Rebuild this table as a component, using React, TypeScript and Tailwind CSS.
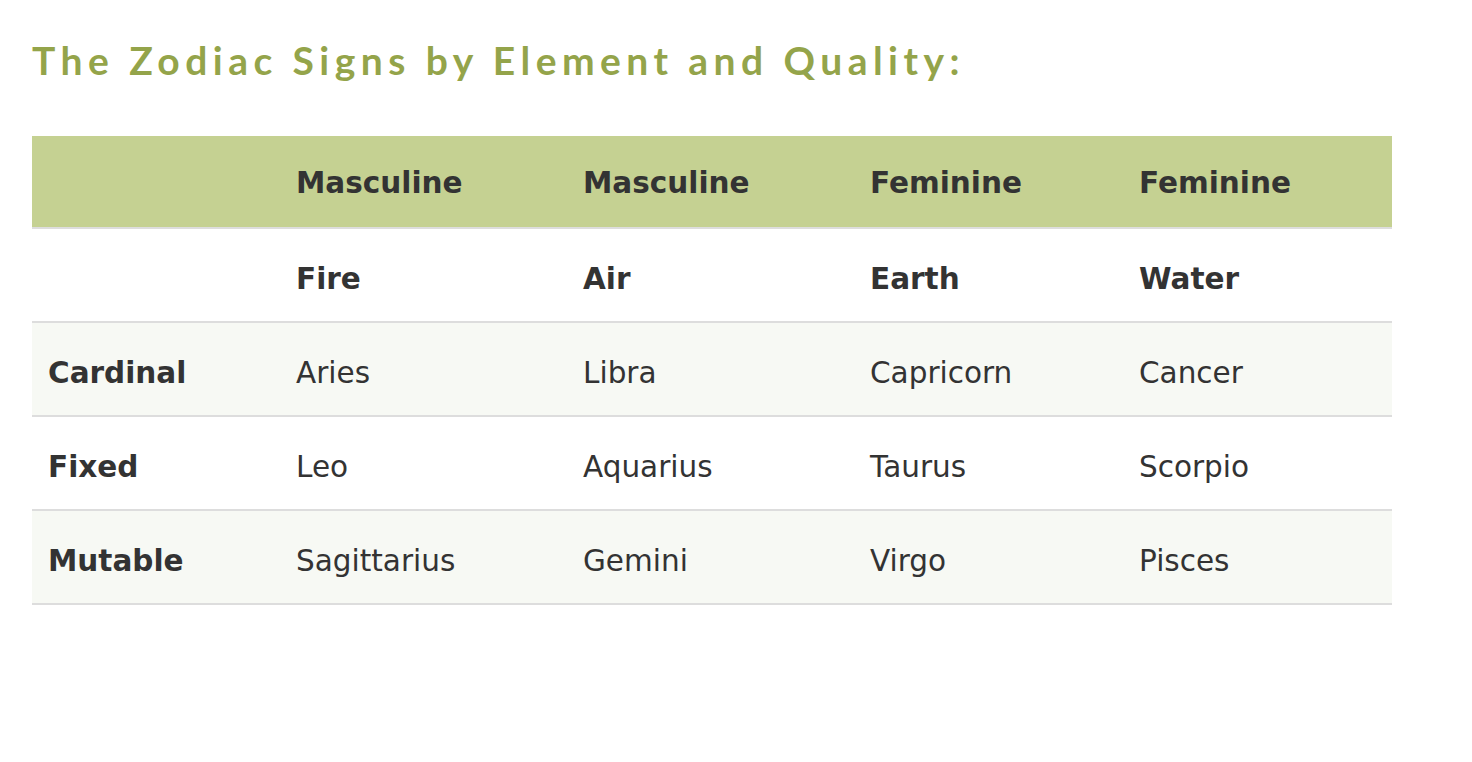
export default function App() {
  const heads = ["Masculine", "Masculine", "Feminine", "Feminine"];
  const elements = ["Fire", "Air", "Earth", "Water"];
  const rows = [
    ["Cardinal", "Aries", "Libra", "Capricorn", "Cancer"],
    ["Fixed", "Leo", "Aquarius", "Taurus", "Scorpio"],
    ["Mutable", "Sagittarius", "Gemini", "Virgo", "Pisces"],
  ];
  const widths = ["w-[248px]", "w-[287px]", "w-[287px]", "w-[269px]", "w-[269px]"];

  return (
    <div className="min-h-screen bg-white px-8 pt-[36px] font-['DejaVu_Sans',Verdana,sans-serif] text-[#333333]">
      <h1 className="font-['Lato',sans-serif] text-[39px] font-bold tracking-[5.45px] text-[#94a44a] leading-[48px]">
        The Zodiac Signs by Element and Quality:
      </h1>

      <table className="mt-[52px] w-[1360px] border-collapse table-fixed text-[29.5px] leading-[36px]">
        <colgroup>
          {widths.map((w, i) => (
            <col key={i} className={w} />
          ))}
        </colgroup>
        <thead>
          <tr className="h-[92px] bg-[#c5d192] border-b-2 border-[#dddddd]">
            <th className="px-4 pt-[3px] text-left font-bold"></th>
            {heads.map((h, i) => (
              <th key={i} className="px-4 pt-[3px] text-left font-bold">{h}</th>
            ))}
          </tr>
        </thead>
        <tbody>
          <tr className="h-[94px] bg-white border-b-2 border-[#dddddd]">
            <td className="px-4 pt-[7px]"></td>
            {elements.map((e) => (
              <td key={e} className="px-4 pt-[7px] font-bold">{e}</td>
            ))}
          </tr>
          {rows.map((r, ri) => (
            <tr
              key={r[0]}
              className={`h-[94px] border-b-2 border-[#dddddd] ${ri % 2 === 0 ? "bg-[#f7f9f4]" : "bg-white"}`}
            >
              {r.map((c, ci) => (
                <td key={ci} className={`px-4 pt-[7px] ${ci === 0 ? "font-bold" : ""}`}>{c}</td>
              ))}
            </tr>
          ))}
        </tbody>
      </table>
    </div>
  );
}
